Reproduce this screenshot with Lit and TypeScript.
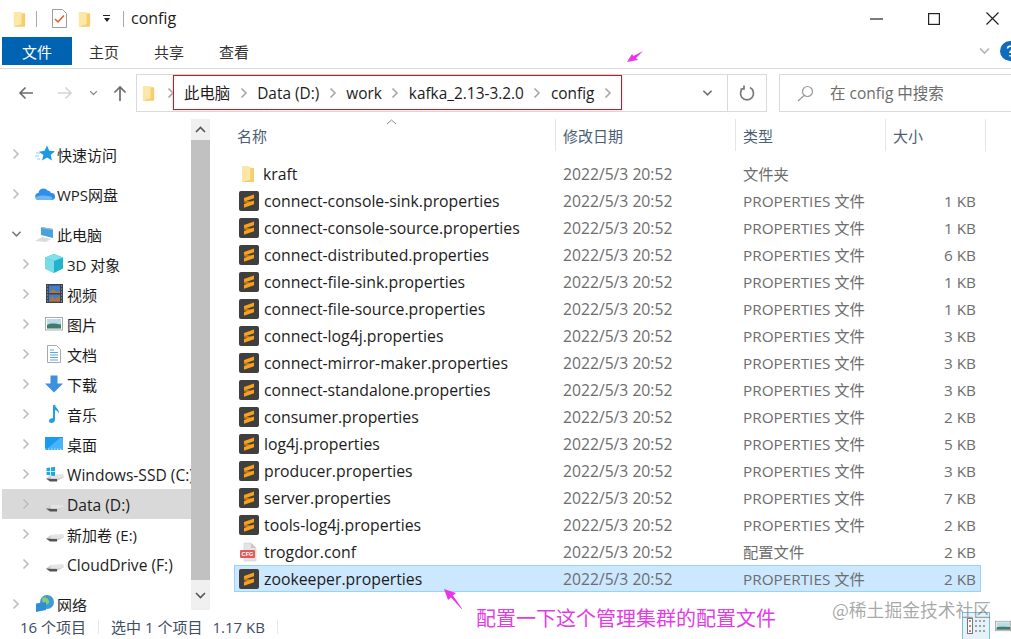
import { LitElement, html, css, svg } from "lit";
import { customElement } from "lit/decorators.js";

const folder = (w = 14, h = 18) => html`<svg class="ic" width=${w} height=${h} viewBox="0 0 14 18">
  <path d="M1 1.5h6l1 1.5h5v14H1z" fill="#f3c965"/>
  <path d="M1 1.5h8.5V15L1 17z" fill="#fbe7a6"/>
  <path d="M9.5 3H13v14H1l8.5-2z" fill="#f6cf6c"/>
</svg>`;

const sublime = () => html`<svg class="ic" width="20" height="20" viewBox="0 0 20 20">
  <rect width="20" height="20" rx="2" fill="#3f3f3f"/>
  <path d="M5 7 15 3.500v3.800L5 10.800z" fill="#f7a11e"/>
  <path d="M5 9.500 15 11v2L5 11.500z" fill="#c9771a"/>
  <path d="M5 13 15 9.500v3.800L5 16.800z" fill="#f7a11e"/>
</svg>`;

const cfg = () => html`<svg class="ic" width="20" height="20" viewBox="0 0 20 20">
  <path d="M5 1h7l5 5v13H5z" fill="#e4e4e4" stroke="#cfcfcf" stroke-width=".6"/>
  <path d="M12 1v5h5z" fill="#c6c6c6"/>
  <rect x="1" y="8" width="15" height="8" rx="1.2" fill="#e05a5a"/>
  <text x="8.5" y="14.2" font-size="5.6" text-anchor="middle" fill="#fff" font-family="Liberation Sans" font-weight="700">CFG</text>
</svg>`;

const chevR = (c = "#a6a6a6") => html`<svg class="ic" width="8" height="12" viewBox="0 0 8 12"><path d="M1.5 1.5 6 6l-4.5 4.5" fill="none" stroke=${c} stroke-width="1.6"/></svg>`;
const chevD = (c = "#6f6f6f", w = 12) => html`<svg class="ic" width=${w} height="8" viewBox="0 0 12 8"><path d="M1.5 1.5 6 6l4.5-4.5" fill="none" stroke=${c} stroke-width="1.7"/></svg>`;

const drive = (win = false) => svg`
  <path d="M1 14.500 6 11 18 10.500l1 2.500-7 4H5z" fill="#cfcfcf"/>
  <path d="M1 14.500 5 17.500h7v-2.700H5z" fill="#555"/>
  <path d="M6 11 18 10.500l1 2.500-7 1.800-6.500-.3z" fill="#e4e4e4"/>
  ${win ? svg`<path d="M1.500 4 5 3.500V7H1.500zM5.800 3.400 10 2.800V7H5.800zM1.500 7.800H5v3.500l-3.500-.5zM5.800 7.800H10v4.300l-4.200-.6z" fill="#19a9e6"/>` : ""}`;

const navIcons: Record<string, unknown> = {
  star: svg`<path d="M12 1.500l2.300 5.300 5.700.5-4.300 3.700 1.300 5.500-5-3-4.900 3 1.300-5.500L4 7.800l5.500-1z" fill="#1a9be6"/><path d="M1 9h4M0 12h4M2 15h3" stroke="#8fcdf2" stroke-width="1"/>`,
  cloud: svg`<path d="M4 16a3.500 3.500 0 0 1-.5-7 5 5 0 0 1 9-2.500 3.500 3.500 0 0 1 3.500 2.500 3.500 3.500 0 0 1 1 7z" fill="#2f8ee8"/><path d="M1 13c4-2 10-2 16 0v1.500c0 1-1 1.500-2 1.500H4c-2 0-3-1-3-3z" fill="#70b6f5"/>`,
  pc: svg`<path d="M6 3 18 5v9L6 11z" fill="#4aa3df"/><path d="M6 3 18 5v1L6 4z" fill="#a8b6c4"/><path d="M0 17 7 13l9 2-5 3z" fill="#dcdcdc"/>`,
  cube: svg`<path d="M9 0 18 3.500v11L9 19 0 14.500v-11z" fill="#20b4cc"/><path d="M9 0 18 3.500 9 7 0 3.500z" fill="#7fe0ee"/><path d="M0 3.500 9 7v12L0 14.500z" fill="#78dbe6"/>`,
  film: svg`<rect x="1" y="0" width="17" height="19" fill="#3b4450"/><rect x="4" y="1.500" width="11" height="7.500" fill="#3f7fd0"/><path d="M4 9 8 5l4 3 3-1v2z" fill="#b9762f"/><rect x="4" y="10.500" width="11" height="7" fill="#3f7fd0"/><path d="M4 17.500 7 12l3 3 5-3v5.500z" fill="#b0762f"/><path d="M2.500 2h.6M2.500 5h.6M2.500 8h.6M2.500 11h.6M2.500 14h.6M2.500 17h.6M16 2h.6M16 5h.6M16 8h.6M16 11h.6M16 14h.6M16 17h.6" stroke="#fff" stroke-width="1.200"/>`,
  pic: svg`<rect x=".5" y="3.500" width="17" height="12.500" fill="#fff" stroke="#a9a9a9"/><rect x="2" y="5" width="14" height="9.500" fill="#bcd9e6"/><path d="M2 11c4-2.500 8-1.500 14-.5v4H2z" fill="#3f7d6a"/>`,
  doc: svg`<path d="M2.500 1.500h9l4 4v13h-13z" fill="#fff" stroke="#a9a9a9"/><path d="M5 6h4M5 8.500h8M5 11h8M5 13.500h8M5 16h8" stroke="#5aa7d8" stroke-width="1"/>`,
  down: svg`<path d="M5.500 1.500h7v8H18l-9 9-9-9h5.500z" fill="#3f8fdf"/>`,
  note: svg`<path d="M8 1h2c.5 3 4.500 4 4 9-.5-2-2-3.500-4-4v9.500c0 2.500-2 3.500-3.500 3.500S4 18.500 4 16.800 5.800 14 8 14.300z" fill="#1f9fe8"/>`,
  desk: svg`<rect x="0" y="3" width="18" height="13" fill="#1a9bf0"/><path d="M2 15 15 4h3v12z" fill="#47b5f7"/><path d="M0 15.200h18" stroke="#fff" stroke-dasharray="1.500 1.500" stroke-width=".8"/>`,
  ssd: drive(true),
  drv: drive(false),
  net: svg`<circle cx="12" cy="8" r="7" fill="#3f9bd8"/><path d="M7 4c3-2 6 0 7 3s-3 4-6 3z" fill="#8ccb72"/><path d="M1 9.500 11 8v8L1 18z" fill="#2f8fd6"/>`,
};
const nav = (k: string) => html`<svg class="ic" width="20" height="20" viewBox="0 0 20 20">${navIcons[k]}</svg>`;

type Nav = { t: string; i: string; lvl: number; open?: boolean; sel?: boolean; gap?: boolean; lat?: boolean };
const navItems: Nav[] = [
  { t: "快速访问", i: "star", lvl: 0 },
  { t: "WPS网盘", i: "cloud", lvl: 0, gap: true },
  { t: "此电脑", i: "pc", lvl: 0, open: true, gap: true },
  { t: "3D 对象", i: "cube", lvl: 1 },
  { t: "视频", i: "film", lvl: 1 },
  { t: "图片", i: "pic", lvl: 1 },
  { t: "文档", i: "doc", lvl: 1 },
  { t: "下载", i: "down", lvl: 1 },
  { t: "音乐", i: "note", lvl: 1 },
  { t: "桌面", i: "desk", lvl: 1 },
  { t: "Windows-SSD (C:)", i: "ssd", lvl: 1, lat: true },
  { t: "Data (D:)", i: "drv", lvl: 1, sel: true, lat: true },
  { t: "新加卷 (E:)", i: "drv", lvl: 1 },
  { t: "CloudDrive (F:)", i: "drv", lvl: 1, lat: true },
  { t: "网络", i: "net", lvl: 0, gap: true },
];

const prop = "PROPERTIES 文件";
type F = { n: string; ty: string; s: string; k: "dir" | "sub" | "cfg"; sel?: boolean };
const sub = (n: string, kb: number, sel = false): F => ({ n, ty: prop, s: `${kb} KB`, k: "sub", sel });
const files: F[] = [
  { n: "kraft", ty: "文件夹", s: "", k: "dir" },
  sub("connect-console-sink.properties", 1),
  sub("connect-console-source.properties", 1),
  sub("connect-distributed.properties", 6),
  sub("connect-file-sink.properties", 1),
  sub("connect-file-source.properties", 1),
  sub("connect-log4j.properties", 3),
  sub("connect-mirror-maker.properties", 3),
  sub("connect-standalone.properties", 3),
  sub("consumer.properties", 2),
  sub("log4j.properties", 5),
  sub("producer.properties", 3),
  sub("server.properties", 7),
  sub("tools-log4j.properties", 2),
  { n: "trogdor.conf", ty: "配置文件", s: "2 KB", k: "cfg" },
  sub("zookeeper.properties", 2, true),
];

const crumbs = ["此电脑", "Data (D:)", "work", "kafka_2.13-3.2.0", "config"];

@customElement("app-root")
export class AppRoot extends LitElement {
  static styles = css`
    :host {
      display: flex; flex-direction: column; position: relative;
      width: 1011px; height: 639px; overflow: hidden; background: #fff;
      font-family: "Open Sans", "Noto Sans CJK SC", sans-serif; font-size: 15px; color: #1c1c1c;
    }
    .ic { display: block; flex: none; }
    .title { height: 37px; display: flex; align-items: center; padding-left: 13px; flex: none; }
    .title .sep { width: 1px; height: 16px; background: #a8a8a8; }
    .title .name { font-size: 16px; margin-left: 7px; padding-bottom: 2px; }
    .caret { margin-left: 12px; width: 7px; display: flex; flex-direction: column; gap: 2px; align-items: center; }
    .caret i { display: block; width: 7px; height: 1px; background: #222; }
    .caret b { display: block; border: 3.500px solid transparent; border-top: 4px solid #222; border-bottom: 0; }
    .win { margin-left: auto; margin-right: -10px; display: flex; align-items: center; }
    .win span { width: 58px; display: flex; justify-content: center; }

    .ribbon { height: 28px; flex: none; display: flex; align-items: center; padding-left: 2px; font-size: 15px; color: #333; }
    .tab { margin-right: 35px; }
    .tab.file { width: 70px; height: 28px; background: #0063b1; color: #fff; margin-right: 17px; display: flex; align-items: center; justify-content: center; }
    .collapse { margin-left: auto; margin-right: -9px; display: flex; align-items: center; gap: 9px; }

    .addr { flex: none; margin-top: 3px; border-top: 1.500px solid #dcdcdc; display: flex; align-items: center; padding: 5px 0 7px; height: 38px; box-sizing: content-box; }
    .navb { width: 136px; flex: none; display: flex; align-items: center; }
    .navb .a { display: flex; justify-content: center; }
    .path { width: 631px; height: 38px; box-sizing: border-box; border: 1.500px solid #dadada; display: flex; align-items: center; flex: none; }
    .path .fold { margin-left: 5px; margin-right: 12px; }
    .crumbs { display: flex; align-items: center; margin-left: 9px; gap: 9.500px; font-size: 15.400px; line-height: 20px; }
    .crumbs span { padding-top: 2px; }
    .path .drop { margin-left: auto; width: 39px; display: flex; justify-content: center; }
    .path .ref { width: 39px; height: 100%; border-left: 1.500px solid #dadada; display: flex; align-items: center; justify-content: center; box-sizing: border-box; }
    .search { margin-left: 12px; flex: 1; height: 38px; box-sizing: border-box; border: 1.500px solid #dadada; border-right: 0; display: flex; align-items: center; padding-left: 17px; color: #6d6d6d; gap: 16px; font-size: 15.500px; }
    .search span { padding-bottom: 2px; }

    .body { flex: 1; min-height: 0; display: flex; }
    .side { width: 191px; flex: none; overflow: hidden; padding-top: 20px; padding-left: 2px; box-sizing: border-box; font-size: 15px; }
    .nrow { height: 30px; display: flex; align-items: center; white-space: nowrap; }
    .nrow.gap { margin-top: 10px; }
    .nrow.sel { background: #d9d9d9; }
    .nrow .chev { width: 16px; display: flex; justify-content: center; flex: none; margin-right: 11px; }
    .nrow .txt { margin-left: 2px; }
    .nrow .txt.lat { font-size: 15.600px; padding-top: 2px; }
    .l0 { padding-left: 6px; } .l1 { padding-left: 16px; }
    .sb { width: 19px; flex: none; background: #f0f0f0; display: flex; flex-direction: column; height: 491px; }
    .sb .btn { height: 21px; display: flex; align-items: center; justify-content: center; flex: none; }
    .sb .thumb { flex: 1; background: #c1c1c1; }
    .sb .btn.d { height: 30px; }

    .list { flex: 1; padding-left: 24px; min-width: 0; }
    .hd { height: 32px; display: flex; margin-bottom: 9px; margin-left: 1px; color: #4c5e75; font-size: 15px; position: relative; }
    .hd div { display: flex; align-items: center; padding-left: 7px; box-sizing: border-box; border-right: 1.500px solid #e5e5e5; }
    .hd .c1 { width: 321px; padding-left: 2px; } .hd .c2 { width: 180px; } .hd .c3 { width: 150px; } .hd .c4 { width: 100px; }
    .sort { position: absolute; left: 151px; top: 0; }
    .row { height: 27px; width: 747px; box-sizing: border-box; padding: 0 4px 0 5px; display: grid; grid-template-columns: 323px 180px 1fr 61px; align-items: center; border: 1px solid transparent; color: #6d6d6d; font-size: 15.700px; }
    .row.sel { background: #cce8ff; border-color: #99d1ff; }
    .row .nm { display: flex; align-items: center; gap: 5px; color: #1c1c1c; font-size: 15.800px; margin-left: -1px; }
    .row .ty { font-size: 15.300px; padding-bottom: 2px; }
    .row .dirI { margin-left: 2px; margin-right: 3px; }
    .row .sz { text-align: right; font-size: 15.300px; }

    .status { flex: none; height: 27px; display: flex; align-items: center; padding-top: 2px; box-sizing: border-box; padding-left: 20px; font-size: 15px; color: #3e4d63; background: #fff; }
    .status .s { width: 1px; height: 14px; background: #e8e8e8; margin: 0 12px; }
    .views { margin-left: auto; display: flex; align-self: flex-start; margin-top: -2px; }
    .views .v1 { width: 28px; height: 27px; box-sizing: border-box; border: 1px solid #7db9d8; border-bottom: 0; background: #e6f2fa; display: flex; align-items: center; justify-content: center; }
    .views .v2 { width: 16px; margin-left: 5px; display: flex; align-items: center; overflow: hidden; }

    .redbox { position: absolute; left: 173px; top: 75px; width: 449px; height: 35px; box-sizing: border-box; border: 1.500px solid #b5202a; box-shadow: 0 0 2px #f6b9b9; pointer-events: none; }
    .arrow { position: absolute; pointer-events: none; }
    .note { position: absolute; left: 476px; top: 603px; font-size: 20px; line-height: 30px; color: #e33ce6; font-family: "Noto Sans CJK SC", sans-serif; white-space: nowrap; }
    .mark { position: absolute; left: 832px; top: 597px; font-size: 17.800px; line-height: 24px; color: rgba(110,110,110,.6); font-family: "Noto Sans CJK SC", sans-serif; white-space: nowrap; }
  `;

  render() {
    return html`
      <div class="title">
        ${folder(13, 18)}
        <span class="sep" style="margin:0 15px 0 10px"></span>
        <svg class="ic" width="15" height="19" viewBox="0 0 15 19"><path d="M.500.500h10l4 4v14H.500z" fill="#fff" stroke="#9d9d9d"/><path d="M3 10l3 3 6-6.500" fill="none" stroke="#dd5a2b" stroke-width="1.500"/></svg>
        <span style="width:11px"></span>
        ${folder(13, 18)}
        <span class="caret"><i></i><b></b></span>
        <span class="sep" style="margin-left:13px"></span>
        <span class="name">config</span>
        <div class="win">
          <span><svg width="13" height="2" viewBox="0 0 13 2"><path d="M0 1h13" stroke="#222" stroke-width="1.200"/></svg></span>
          <span><svg width="12" height="12" viewBox="0 0 12 12"><rect x=".6" y=".6" width="10.800" height="10.800" fill="none" stroke="#222" stroke-width="1.200"/></svg></span>
          <span><svg width="13" height="13" viewBox="0 0 13 13"><path d="M.5.500l12 12M12.500.500l-12 12" stroke="#222" stroke-width="1.200"/></svg></span>
        </div>
      </div>

      <div class="ribbon">
        <span class="tab file">文件</span>
        <span class="tab">主页</span>
        <span class="tab">共享</span>
        <span class="tab">查看</span>
        <span class="collapse">${chevD("#b5b5b5", 13)}
          <svg class="ic" width="20" height="20" viewBox="0 0 20 20"><circle cx="10" cy="10" r="10" fill="#0f6cbd"/><path d="M7.500 7.500a2.500 2.500 0 1 1 3.500 2.500c-.8.500-1 1-1 2M10 14v1.500" fill="none" stroke="#fff" stroke-width="1.600"/></svg>
        </span>
      </div>

      <div class="addr">
        <div class="navb">
          <span class="a" style="width:52px"><svg width="16" height="14" viewBox="0 0 16 14"><path d="M15 7H2M7.500 1.500 2 7l5.500 5.500" fill="none" stroke="#6b6b6b" stroke-width="1.600"/></svg></span>
          <span class="a" style="width:26px"><svg width="16" height="14" viewBox="0 0 16 14"><path d="M1 7h13M8.500 1.500 14 7l-5.500 5.500" fill="none" stroke="#d4d4d4" stroke-width="1.600"/></svg></span>
          <span class="a" style="width:30px">${chevD("#8a8a8a", 9)}</span>
          <span class="a" style="width:24px"><svg width="14" height="17" viewBox="0 0 14 17"><path d="M7 16V2M1.500 7.500 7 2l5.500 5.500" fill="none" stroke="#6b6b6b" stroke-width="1.700"/></svg></span>
        </div>
        <div class="path">
          <span class="fold">${folder(13, 18)}</span>
          ${chevR()}
          <div class="crumbs">
            ${crumbs.map((c) => html`<span>${c}</span>${chevR()}`)}
          </div>
          <span class="drop">${chevD("#6f6f6f", 11)}</span>
          <span class="ref"><svg width="16" height="16" viewBox="0 0 16 16"><path d="M5 2.600A6.500 6.500 0 1 0 11 2.600M5 .5v3.500H1.500" fill="none" stroke="#777" stroke-width="1.700"/></svg></span>
        </div>
        <div class="search">
          <svg class="ic" width="17" height="17" viewBox="0 0 17 17"><circle cx="10.500" cy="6.500" r="5" fill="none" stroke="#9a9a9a" stroke-width="1.200"/><path d="M7 10.500 1 16" stroke="#9a9a9a" stroke-width="1.200"/></svg>
          <span>在 config 中搜索</span>
        </div>
      </div>

      <div class="body">
        <div class="side">
          ${navItems.map((n) => html`
            <div class="nrow l${n.lvl} ${n.gap ? "gap" : ""} ${n.sel ? "sel" : ""}">
              <span class="chev">${n.open ? chevD("#7a7a7a", 11) : chevR("#bdbdbd")}</span>
              ${nav(n.i)}
              <span class="txt ${n.lat ? "lat" : ""}">${n.t}</span>
            </div>`)}
        </div>
        <div class="sb">
          <div class="btn"><svg width="11" height="7" viewBox="0 0 11 7"><path d="M1 6 5.500 1.500 10 6" fill="none" stroke="#555" stroke-width="1.600"/></svg></div>
          <div class="thumb"></div>
          <div class="btn d"><svg width="11" height="7" viewBox="0 0 11 7"><path d="M1 1 5.500 5.500 10 1" fill="none" stroke="#555" stroke-width="1.600"/></svg></div>
        </div>
        <div class="list">
          <div class="hd">
            <div class="c1">名称</div><div class="c2">修改日期</div><div class="c3">类型</div><div class="c4">大小</div>
            <svg class="sort" width="11" height="6" viewBox="0 0 11 6"><path d="M1 5 5.500 1 10 5" fill="none" stroke="#8a8a8a" stroke-width="1"/></svg>
          </div>
          ${files.map((f) => html`
            <div class="row ${f.sel ? "sel" : ""}">
              <span class="nm">
                ${f.k === "dir" ? html`<span class="dirI">${folder(14, 18)}</span>` : f.k === "cfg" ? cfg() : sublime()}
                <span>${f.n}</span>
              </span>
              <span>2022/5/3 20:52</span>
              <span class="ty">${f.ty}</span>
              <span class="sz">${f.s}</span>
            </div>`)}
        </div>
      </div>

      <div class="status">
        <span>16 个项目</span><span class="s"></span>
        <span>选中 1 个项目</span><span style="width:10px"></span><span>1.17 KB</span><span class="s" style="margin-left:12px"></span>
        <div class="views">
          <div class="v1"><svg width="20" height="20" viewBox="0 0 20 20"><rect x="1.500" y="2.500" width="5" height="15" fill="#fff" stroke="#777"/><path d="M3 5h2M3 10h2M3 15h2" stroke="#c0504d" stroke-width="1.500"/><path d="M9 5h2M13 5h2M17 5h2M9 10h2M13 10h2M17 10h2M9 15h2M13 15h2M17 15h2" stroke="#555" stroke-width="1"/></svg></div>
          <div class="v2"><svg width="22" height="14" viewBox="0 0 22 14"><rect x=".5" y=".5" width="21" height="13" fill="#fff" stroke="#999"/><path d="M2 9c5-3 10-2 19-1v4H2z" fill="#3f7d6a"/><rect x="2" y="2" width="19" height="6" fill="#bcd9e6"/></svg></div>
        </div>
      </div>

      <div class="redbox"></div>
      <svg class="arrow" style="left:627px;top:51px" width="17" height="11" viewBox="0 0 17 11"><path d="M0 11 5 3 6.500 5 16 0 9 7 11 9z" fill="#ea35ee"/></svg>
      <svg class="arrow" style="left:443px;top:588px" width="20" height="22" viewBox="0 0 20 22"><path d="M1 1 13 5 10 7.500 19 20.500 18.500 21 8 9.500 5 12z" fill="#ea35ee"/></svg>
      <div class="note">配置一下这个管理集群的配置文件</div>
      <div class="mark">@稀土掘金技术社区</div>
    `;
  }
}
